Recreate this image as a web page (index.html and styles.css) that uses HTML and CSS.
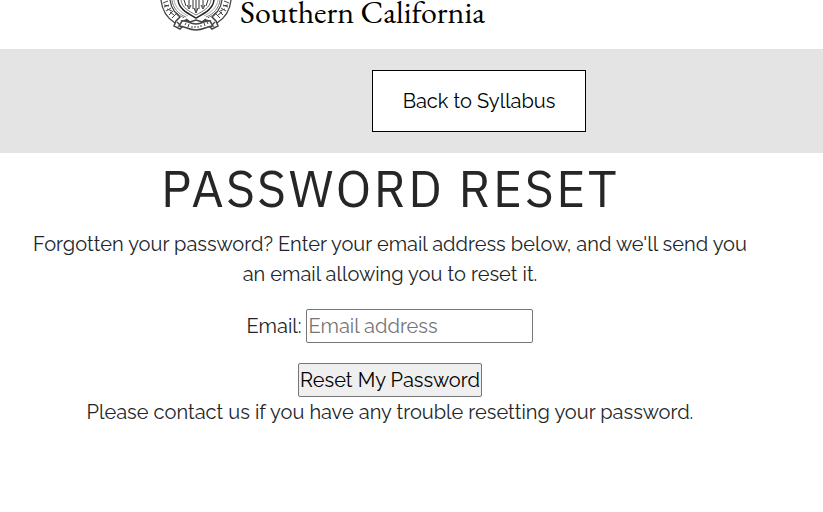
FILE: index.html
```html
<!DOCTYPE html>
<html lang="en">
<head>
<meta charset="utf-8">
<title>Password Reset</title>
<link rel="stylesheet" href="styles.css">
</head>
<body>
<header class="brand">
  <svg class="seal" viewBox="0 0 72 32" width="72" height="32" fill="none" stroke="#444" aria-hidden="true">
    <path d="M1 0C2 10 7 18 15 23M71 0C70 10 65 18 57 23" stroke-width="1.3"/>
    <path d="M10 0C11 8 16 15 24 18M62 0C61 8 56 15 48 18" stroke-width="1.3"/>
    <path d="M12 0C13 8 18 14 26 17M60 0C59 8 54 14 46 17" stroke="#777"/>
    <path d="M14 0C15 7 20 12 28 16M58 0C57 7 52 12 44 16" stroke="#aaa"/>
    <path d="M3 3l5-2M4 7l5-2M4 5l5 1M6 11l5-3M7 9l5 2M9 15l4-4M10 12l4 3M12 18l4-4M69 3l-5-2M68 7l-5-2M68 5l-5 1M66 11l-5-3M65 9l-5 2M63 15l-4-4M62 12l-4 3M60 18l-4-4"/>
    <path d="M18 0C19 9 27 13 36 18C45 13 53 9 54 0" stroke="#222" stroke-width="1.5"/>
    <path d="M21 0C22 8 29 11 36 15C43 11 50 8 51 0" stroke="#777"/>
    <path d="M29 0v7m-2-2l2 4 2-4M36 0v11m-2-3l2 5 2-5M43 0v7m-2-2l2 4 2-4M33 0v9M39 0v9M24 0l2 6M48 0l-2 6" stroke="#333"/>
    <path d="M16 13l4 4-4 4-2 5 6 3 5-5-3-3 5-1 4 3M56 13l-4 4 4 4 2 5-6 3-5-5 3-3-5-1-4 3" fill="#fff" stroke-width="1.5"/>
    <path d="M22 21C27 20 29 24 36 24S45 20 50 21L53 26C47 26 44 30 36 30S25 26 19 26Z" fill="#fff" stroke-width="1.5"/>
    <path d="M26 23l-1 2M29 24l-1 3M32 26v2M35 26v2M38 26v2M41 25v2M44 23l1 3M47 22l1 2"/>
    <path d="M26 19l4 3 6-2 6 2 4-3M17 22l3 3M55 22l-3 3" stroke-width="1.4"/>
  </svg>
  <span class="wordmark">Southern California</span>
</header>
<nav class="toolbar">
  <a class="back" href="#">Back to Syllabus</a>
</nav>
<main class="content">
  <h1>Password Reset</h1>
  <p>Forgotten your password? Enter your email address below, and we'll send you an email allowing you to reset it.</p>
  <form>
    <div class="field">
      <label for="email">Email:</label>
      <input id="email" type="email" placeholder="Email address">
    </div>
    <button type="button">Reset My Password</button>
  </form>
  <p>Please contact us if you have any trouble resetting your password.</p>
</main>
</body>
</html>
```
FILE: styles.css
```css
* {
  box-sizing: border-box;
}

body {
  margin: 0;
  background: #fff;
  color: #212529;
  font: 20px/30px Raleway, Lato, sans-serif;
}

.brand {
  display: flex;
  align-items: flex-start;
  gap: 8px;
  padding: 0 160px 17px;
}

.seal {
  flex: none;
}

.wordmark {
  color: #000;
  font: 32px/24px "EB Garamond", "Liberation Serif", serif;
  white-space: nowrap;
}

.toolbar {
  display: flex;
  justify-content: center;
  padding: 21px 0 21px 135px;
  background: #e4e4e4;
}

.back {
  padding: 15px 30px;
  border: 1px solid #000;
  background: #fff;
  color: #000;
  text-decoration: none;
}

.content {
  margin-right: 43px;
  padding: 6px 30px;
  text-align: center;
}

h1 {
  margin: 0 0 10px;
  color: #262626;
  font: 50px/60px "IBM Plex Sans", Roboto, sans-serif;
  letter-spacing: 0.05em;
  text-transform: uppercase;
}

p {
  margin: 0;
}

.field {
  display: flex;
  justify-content: center;
  align-items: center;
  gap: 5px;
  margin: 20px 0;
}

input,
button {
  height: 34px;
  padding: 1px;
  border: 1px solid #767676;
  border-radius: 2px;
  font: inherit;
}

input {
  width: 227px;
}

input::placeholder {
  color: #757575;
}

button {
  display: block;
  margin: 0 auto;
  background: #efefef;
  color: #000;
}
```
